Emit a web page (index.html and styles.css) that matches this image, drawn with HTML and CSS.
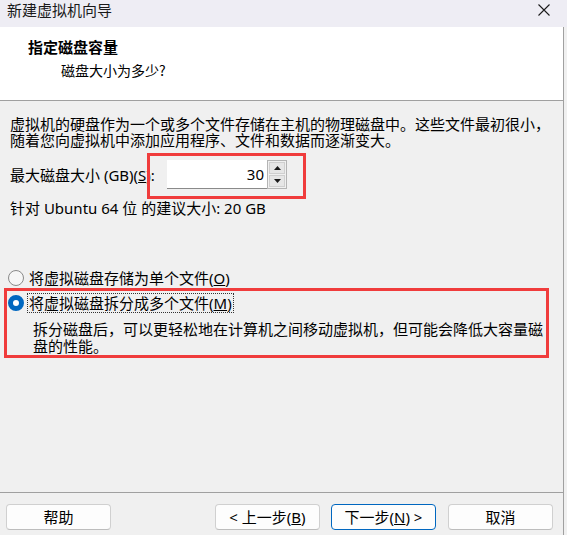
FILE: index.html
```html
<!DOCTYPE html>
<html lang="zh-CN">
<head>
<meta charset="utf-8">
<title>新建虚拟机向导</title>
<link rel="stylesheet" href="styles.css">
</head>
<body>
<div class="win">
  <div class="titlebar">
    <span class="title">新建虚拟机向导</span>
    <svg class="close" width="12" height="12" viewBox="0 0 12 12"><path d="M0.5 0.5 L11.5 11.5 M11.5 0.5 L0.5 11.5" stroke="#1b1b1b" stroke-width="1.1" fill="none"/></svg>
  </div>
  <div class="frame">
    <div class="header">
      <div class="h-title">指定磁盘容量</div>
      <div class="h-sub">磁盘大小为多少?</div>
    </div>
    <div class="content">
      <p class="intro">虚拟机的硬盘作为一个或多个文件存储在主机的物理磁盘中。这些文件最初很小，<br>随着您向虚拟机中添加应用程序、文件和数据而逐渐变大。</p>
      <div class="size-row">
        <span class="size-label">最大磁盘大小 (GB)(<u>S</u>):</span>
        <div class="spin">
          <div class="spin-field">30</div>
          <div class="spin-btns">
            <div class="spin-btn"><svg width="7" height="4" viewBox="0 0 7 4"><path d="M3.5 0 L7 4 L0 4 Z" fill="#1a1a1a"/></svg></div>
            <div class="spin-btn"><svg width="7" height="4" viewBox="0 0 7 4"><path d="M0 0 L7 0 L3.5 4 Z" fill="#1a1a1a"/></svg></div>
          </div>
        </div>
        <div class="mark mark-spin"></div>
      </div>
      <p class="hint">针对 Ubuntu 64 位 的建议大小: 20 GB</p>
      <div class="radio-row first">
        <span class="radio"></span>
        <span class="radio-label">将虚拟磁盘存储为单个文件(<u>O</u>)</span>
      </div>
      <div class="split">
        <div class="radio-row">
          <span class="radio checked"></span>
          <span class="radio-label focus">将虚拟磁盘拆分成多个文件(<u>M</u>)</span>
        </div>
        <p class="desc">拆分磁盘后，可以更轻松地在计算机之间移动虚拟机，但可能会降低大容量磁<br>盘的性能。</p>
        <div class="mark mark-split"></div>
      </div>
    </div>
    <div class="footer">
      <button class="btn">帮助</button>
      <div class="spacer"></div>
      <button class="btn">&lt; 上一步(<u>B</u>)</button>
      <button class="btn primary">下一步(<u>N</u>) &gt;</button>
      <button class="btn">取消</button>
    </div>
  </div>
</div>
</body>
</html>
```

FILE: styles.css
```css
* { box-sizing: border-box; }
html, body {
  margin: 0;
  padding: 0;
}
body {
  width: 567px;
  height: 535px;
  overflow: hidden;
  background: #f0f0f0;
  font-family: "Noto Sans", "Noto Sans CJK SC", sans-serif;
  font-size: 15px;
  color: #000;
}
.win {
  width: 567px;
  height: 535px;
  display: flex;
  flex-direction: column;
}
.titlebar {
  height: 27px;
  flex: none;
  background: #eeedf4;
  display: flex;
  align-items: flex-start;
  justify-content: space-between;
  padding: 0 17px 0 7px;
}
.title {
  font-size: 15px;
  line-height: 20px;
  color: #1a1a1a;
  font-family: "Noto Sans CJK SC", sans-serif;
}
.close {
  margin-top: 4px;
}
.frame {
  flex: 1;
  width: 564px;
  border-right: 1px solid #a0a0a0;
  display: flex;
  flex-direction: column;
}
.header {
  height: 74px;
  flex: none;
  background: #fff;
  border-bottom: 1px solid #a0a0a0;
  padding: 9px 0 0 28px;
  font-family: "Noto Sans CJK SC", sans-serif;
}
.h-title {
  font-weight: bold;
  font-size: 15px;
  line-height: 22px;
}
.h-sub {
  font-size: 14px;
  line-height: 22px;
  margin-left: 33px;
  margin-top: 1px;
}
.content {
  flex: 1;
  padding: 15px 0 0 10px;
  display: flex;
  flex-direction: column;
  position: relative;
}
.intro {
  margin: 0;
  line-height: 16px;
}
.size-row {
  position: relative;
  margin-top: 12px;
  display: grid;
  grid-template-columns: 157px auto;
  align-items: center;
  justify-content: start;
  height: 29px;
}
.spin {
  display: flex;
  height: 29px;
}
.spin-field {
  width: 100px;
  height: 29px;
  background: #fff;
  border-bottom: 1px solid #8a8a8a;
  text-align: right;
  padding-right: 3px;
  line-height: 28px;
}
.spin-btns {
  width: 20px;
  display: flex;
  flex-direction: column;
  border: 1px solid #b4b4b4;
  background: #f0f0f0;
  padding: 1px;
  gap: 1px;
}
.spin-btn {
  flex: 1;
  background: #e6e6e6;
  border: 1px solid #cfcfcf;
  display: flex;
  align-items: center;
  justify-content: center;
}
.mark {
  position: absolute;
  border: 3px solid #f03c3c;
  pointer-events: none;
}
.mark-spin {
  left: 137px;
  top: -7px;
  width: 159px;
  height: 46px;
}
.hint {
  margin: 11px 0 0;
  line-height: 16px;
}
.radio-row {
  display: flex;
  align-items: center;
  height: 18px;
}
.radio-row.first {
  margin-top: 53px;
  margin-left: -2px;
}
.radio {
  width: 16px;
  height: 16px;
  border-radius: 50%;
  border: 1px solid #8a8a8a;
  background: #f6f6f6;
  flex: none;
}
.radio.checked {
  border: 5px solid #0067c0;
  background: #fff;
}
.radio-label {
  margin-left: 3px;
  line-height: 18px;
  padding: 0 1px;
  border: 1px dotted transparent;
}
.radio-label.focus {
  border: 1px dotted #333;
}
.split {
  position: relative;
  margin-top: 7px;
  margin-left: -2px;
}
.desc {
  margin: 9px 0 0 25px;
  line-height: 17px;
}
.mark-split {
  left: -4px;
  top: -6px;
  width: 545px;
  height: 70px;
}
.footer {
  flex: none;
  height: 43px;
  border-top: 1px solid #a0a0a0;
  display: flex;
  align-items: flex-start;
  padding: 11px 0 0 6px;
  gap: 12px;
}
.spacer {
  flex: 1;
}
.btn {
  width: 105px;
  height: 26px;
  background: #fdfdfd;
  border: 1px solid #d0d0d0;
  border-bottom-color: #bdbdbd;
  border-radius: 4px;
  font-family: "Noto Sans", "Noto Sans CJK SC", sans-serif;
  font-size: 15px;
  color: #000;
  padding: 0;
  line-height: 22px;
}
.footer .btn:nth-child(3) {
  margin-right: -1px;
}
.footer .btn:last-child {
  margin-right: 10px;
}
.btn.primary {
  border: 1px solid #0067c0;
}
```
